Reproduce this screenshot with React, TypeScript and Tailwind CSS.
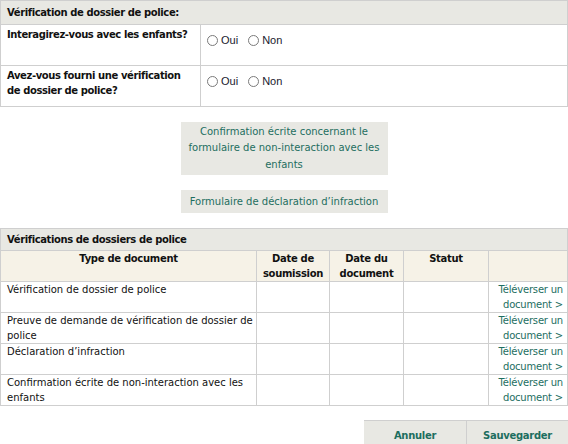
const font = { fontFamily: '"DejaVu Sans", Verdana, sans-serif' };

function Radio({ label }: { label: string }) {
  return (
    <label className="flex items-center gap-[3px] mr-[10px]">
      <span className="inline-block w-[11px] h-[11px] rounded-full border border-[#7a7a7a] bg-white" />
      <span className="text-[11px] text-[#1a1a2e]" style={{ fontFamily: '"Liberation Sans", Arial, sans-serif' }}>
        {label}
      </span>
    </label>
  );
}

const docs = [
  "Vérification de dossier de police",
  "Preuve de demande de vérification de dossier de police",
  "Déclaration d’infraction",
  "Confirmation écrite de non-interaction avec les enfants",
];

export default function App() {
  return (
    <div className="w-[568px] h-[444px] overflow-hidden bg-white text-[10px] leading-[15px] text-[#111]" style={font}>
      <table className="w-full border-collapse">
        <tbody>
          <tr className="h-[24px] bg-[#e8e8e3]">
            <td colSpan={2} className="border border-[#cfcfcf] px-[6px] font-bold tracking-[-0.4px]">
              Vérification de dossier de police:
            </td>
          </tr>
          <tr className="h-[41px]">
            <td className="w-[200px] border border-[#cfcfcf] pl-[6px] pr-[2px] pt-[2px] align-top font-bold tracking-[-0.4px]">
              Interagirez-vous avec les enfants?
            </td>
            <td className="border border-[#cfcfcf] px-[6px] pt-[8px] align-top">
              <div className="flex">
                <Radio label="Oui" />
                <Radio label="Non" />
              </div>
            </td>
          </tr>
          <tr className="h-[41px]">
            <td className="border border-[#cfcfcf] pl-[6px] pr-[2px] pt-[2px] align-top font-bold tracking-[-0.4px]">
              <div className="max-w-[175px]">Avez-vous fourni une vérification de dossier de police?</div>
            </td>
            <td className="border border-[#cfcfcf] px-[6px] pt-[8px] align-top">
              <div className="flex">
                <Radio label="Oui" />
                <Radio label="Non" />
              </div>
            </td>
          </tr>
        </tbody>
      </table>

      <div className="flex flex-col items-center gap-[15px] mt-[15px]">
        <button className="w-[207px] h-[53px] bg-[#e8e8e3] text-[#1d6e5f] px-[4px] leading-[16.5px] text-center">
          Confirmation écrite concernant le formulaire de non-interaction avec les enfants
        </button>
        <button className="w-[207px] h-[23px] bg-[#e8e8e3] text-[#1d6e5f] text-center">
          Formulaire de déclaration d’infraction
        </button>
      </div>

      <table className="w-full border-collapse mt-[15px]">
        <thead>
          <tr className="h-[22px] bg-[#e8e8e3]">
            <th colSpan={5} className="border border-[#cfcfcf] px-[6px] text-left font-bold tracking-[-0.4px]">
              Vérifications de dossiers de police
            </th>
          </tr>
          <tr className="h-[29px] bg-[#f6f2e7] align-top">
            <th className="w-[256px] border border-[#cfcfcf] font-bold tracking-[-0.3px]">Type de document</th>
            <th className="w-[73px] border border-[#cfcfcf] font-bold tracking-[-0.3px]">Date de soumission</th>
            <th className="w-[74px] border border-[#cfcfcf] font-bold tracking-[-0.3px]">Date du document</th>
            <th className="w-[85px] border border-[#cfcfcf] font-bold tracking-[-0.3px]">Statut</th>
            <th className="border border-[#cfcfcf]" />
          </tr>
        </thead>
        <tbody>
          {docs.map((d) => (
            <tr key={d} className="h-[29px] align-top">
              <td className="border border-[#cfcfcf] pl-[6px] pr-[2px]">{d}</td>
              <td className="border border-[#cfcfcf]" />
              <td className="border border-[#cfcfcf]" />
              <td className="border border-[#cfcfcf]" />
              <td className="border border-[#cfcfcf] pr-[4px] text-right text-[#1d6e5f] tracking-[-0.2px]">
                Téléverser un document &gt;
              </td>
            </tr>
          ))}
        </tbody>
      </table>

      <div className="flex justify-end mt-[14px]">
        <button className="w-[102px] h-[30px] bg-[#e8e8e3] border-t border-[#cfcfcf] font-bold text-[#1d6e5f] tracking-[-0.3px]">
          Annuler
        </button>
        <button className="w-[102px] h-[30px] bg-[#e8e8e3] border-t border-l border-[#cfcfcf] font-bold text-[#1d6e5f] tracking-[-0.3px]">
          Sauvegarder
        </button>
      </div>
    </div>
  );
}
